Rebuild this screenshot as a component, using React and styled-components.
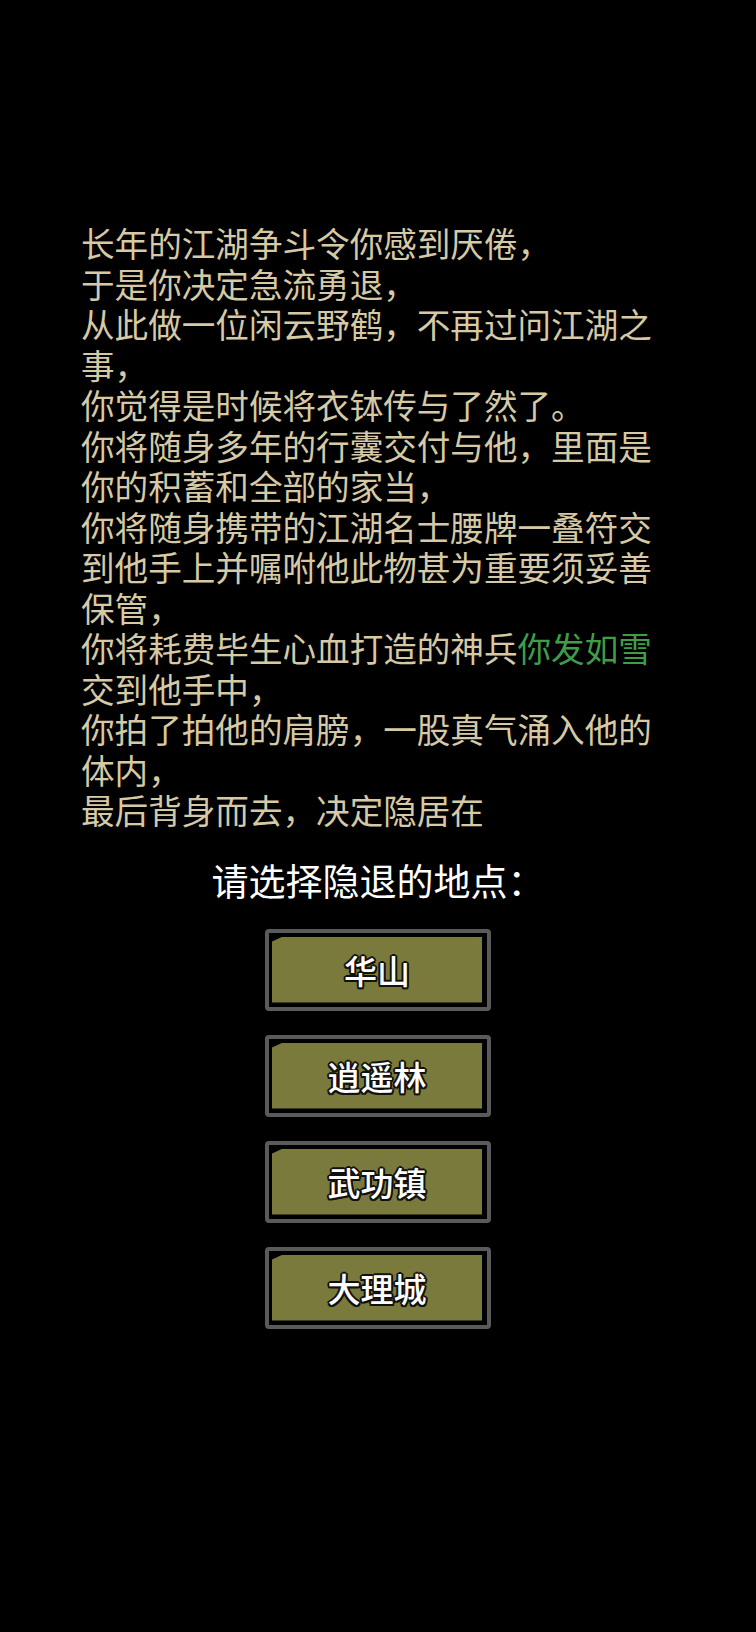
import React from 'react';
import styled, { createGlobalStyle } from 'styled-components';

const GlobalStyle = createGlobalStyle`
  html, body {
    margin: 0;
    padding: 0;
    background: #000;
  }
  body {
    font-family: "Noto Sans CJK SC", "Noto Sans", sans-serif;
  }
`;

const Page = styled.div`
  width: 756px;
  min-height: 1632px;
  background: #000;
  display: flex;
  flex-direction: column;
  align-items: center;
`;

const Story = styled.div`
  align-self: flex-start;
  width: 590px;
  margin: 223px 0 0 81px;
  font-size: 33.6px;
  line-height: 40.5px;
  color: #d6c9a6;
`;

const Line = styled.div``;

const Highlight = styled.span`
  color: #3f9d47;
`;

const Prompt = styled.div`
  margin-top: 24px;
  font-size: 37px;
  line-height: 50px;
  color: #fff;
  text-shadow: 0 0 3px #000, 0 0 6px rgba(0, 0, 0, 0.9);
`;

const Choices = styled.div`
  margin-top: 24px;
  display: flex;
  flex-direction: column;
  gap: 24px;
`;

const Choice = styled.button`
  width: 226px;
  height: 82px;
  box-sizing: border-box;
  padding: 4px 5px 4px 3px;
  background: #000;
  border: 4px solid #5a5a5a;
  border-radius: 4px;
  cursor: pointer;
  font-family: inherit;
`;

const ChoiceFace = styled.div`
  width: 100%;
  height: 100%;
  background: #7a7a3c;
  clip-path: polygon(11px 0, 100% 0, 100% 100%, 0 100%, 0 5px);
  display: flex;
  align-items: center;
  justify-content: center;
  font-size: 33px;
  font-weight: 500;
  color: #fff;
  text-shadow:
    2px 0 0 #111, -2px 0 0 #111, 0 2px 0 #111, 0 -2px 0 #111,
    1.5px 1.5px 0 #111, -1.5px 1.5px 0 #111, 1.5px -1.5px 0 #111, -1.5px -1.5px 0 #111;
`;

const lines = [
  '长年的江湖争斗令你感到厌倦，',
  '于是你决定急流勇退，',
  '从此做一位闲云野鹤，不再过问江湖之事，',
  '你觉得是时候将衣钵传与了然了。',
  '你将随身多年的行囊交付与他，里面是你的积蓄和全部的家当，',
  '你将随身携带的江湖名士腰牌一叠符交到他手上并嘱咐他此物甚为重要须妥善保管，',
];

const places = ['华山', '逍遥林', '武功镇', '大理城'];

const App = () => {
  return (
    <>
      <GlobalStyle />
      <Page>
        <Story>
          {lines.map(l => (
            <Line key={l}>{l}</Line>
          ))}
          <Line>
            你将耗费毕生心血打造的神兵<Highlight>你发如雪</Highlight>交到他手中，
          </Line>
          <Line>你拍了拍他的肩膀，一股真气涌入他的体内，</Line>
          <Line>最后背身而去，决定隐居在</Line>
        </Story>
        <Prompt>请选择隐退的地点：</Prompt>
        <Choices>
          {places.map(p => (
            <Choice key={p}>
              <ChoiceFace>{p}</ChoiceFace>
            </Choice>
          ))}
        </Choices>
      </Page>
    </>
  );
};

export default App;
